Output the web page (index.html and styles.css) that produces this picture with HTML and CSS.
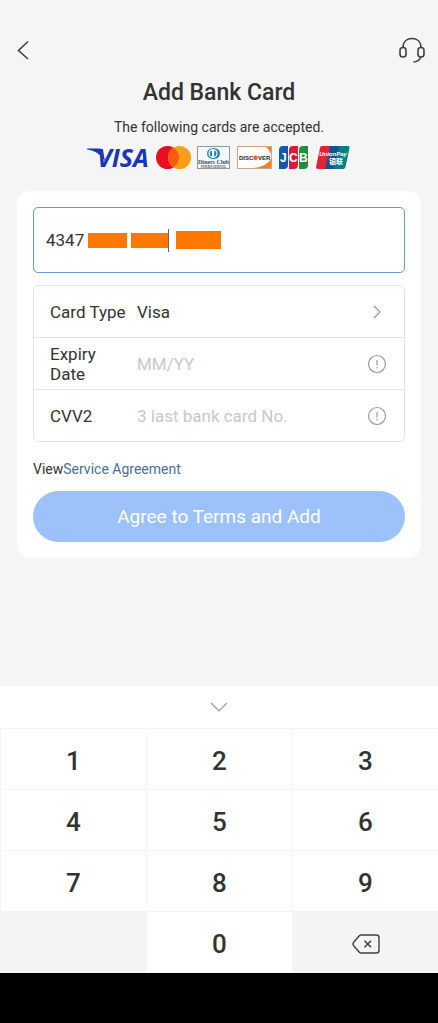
FILE: index.html
```html
<!DOCTYPE html>
<html lang="en">
<head>
<meta charset="utf-8">
<meta name="viewport" content="width=device-width, initial-scale=1">
<title>Add Bank Card</title>
<link rel="stylesheet" href="styles.css">
</head>
<body>
<div class="screen">
  <header class="topbar">
    <button class="icon-btn" type="button" aria-label="Back">
      <svg width="12" height="20" viewBox="0 0 12 20"><path class="line" d="M11 1.500 1.500 10.500l9.500 8.500"/></svg>
    </button>
    <button class="icon-btn" type="button" aria-label="Customer service">
      <svg width="28" height="28" viewBox="0 0 28 28"><g class="line"><rect x="2" y="11.500" width="6" height="9.500" rx="2.800"/><rect x="20" y="11.500" width="6" height="9.500" rx="2.800"/><path d="M5 11.500C5 5.500 9 2.500 14 2.500s9 3 9 9M23 21c-1.500 3.200-4 4.800-7.500 5"/></g></svg>
    </button>
  </header>
  <main class="content">
    <h1 class="title">Add Bank Card</h1>
    <p class="subtitle">The following cards are accepted.</p>
    <div class="brands">
      <svg width="63" height="24" viewBox="0 0 63 24" role="img" aria-label="Visa">
        <path d="M0 2.500h13q2.500 0 3 2.500l2 10C13 8 8 4.500 0 3.500z" fill="#1a36b5"/>
        <text class="visa-text" x="10" y="21">VISA</text>
      </svg>
      <svg width="35" height="24" viewBox="0 0 35 24" role="img" aria-label="Mastercard">
        <circle cx="11.500" cy="11.500" r="11.500" fill="#e80d20"/><circle cx="23.500" cy="11.500" r="11.500" fill="#f79f1b"/>
        <path d="M17.500 1.700a11.500 11.500 0 0 1 0 19.600 11.500 11.500 0 0 1 0-19.600z" fill="#fa5b0c"/>
      </svg>
      <svg width="34" height="24" viewBox="0 0 34 24" role="img" aria-label="Diners Club International">
        <rect x=".5" y=".5" width="32" height="22" fill="#f6f7f8" stroke="#8f9ba3"/>
        <ellipse cx="16.500" cy="7.500" rx="6.500" ry="5.500" fill="#2383b5"/><circle cx="16" cy="7.500" r="4.500" fill="#fff"/>
        <path d="M15 4.200a3.500 3.500 0 0 0 0 6.600zM17.200 4.200a3.500 3.500 0 0 1 0 6.600z" fill="#2383b5"/>
        <text class="diners-text" x="16.500" y="18" text-anchor="middle">Diners Club</text>
        <text class="diners-small" x="16.500" y="21.500" text-anchor="middle">INTERNATIONAL</text>
      </svg>
      <svg width="36" height="24" viewBox="0 0 36 24" role="img" aria-label="Discover">
        <rect x=".5" y=".5" width="34" height="22" fill="#f58220" stroke="#c9a68b"/>
        <path d="M1 1h28c7 6 7 13 0 17-4 2.500-9 4-15 4H1z" fill="#fff"/>
        <text class="discover-text" x="2" y="14">DISC</text><circle cx="18.500" cy="11.800" r="2.400" fill="#f26b21"/><text class="discover-text" x="21" y="14">VER</text>
      </svg>
      <svg width="31" height="24" viewBox="0 0 31 24" role="img" aria-label="JCB">
        <path d="M4 0h5v19q0 4-4 4H0V4q0-4 4-4z" fill="#1559a6"/><path d="M14 0h5v19q0 4-4 4h-5V4q0-4 4-4z" fill="#d31f3d"/><path d="M24 0h5v19q0 4-4 4h-5V4q0-4 4-4z" fill="#21903d"/>
        <text class="jcb-text" x="1" y="16">J</text><text class="jcb-text" x="10" y="16">C</text><text class="jcb-text" x="20" y="16">B</text>
      </svg>
      <svg width="35" height="24" viewBox="0 0 35 24" role="img" aria-label="UnionPay">
        <path d="M6 0h9l-5 23H2q-2 0-2-2L4 2q0-2 2-2z" fill="#df2338"/><path d="M14 0h10l-5 23H9z" fill="#174f91"/><path d="M23 0h9q2 0 1.500 2l-4 19q-.5 2-2.500 2h-9z" fill="#087c87"/>
        <text class="union-text" x="17" y="10" text-anchor="middle">UnionPay</text><text class="union-cjk" x="20" y="18" text-anchor="middle">银联</text>
      </svg>
    </div>
    <form class="card">
      <label class="number">
        <input class="number-input" type="text" inputmode="numeric" aria-label="Card number" value="4347">
        <span class="mask"></span><span class="mask mask-mid"></span><span class="caret"></span><span class="mask mask-last"></span>
      </label>
      <div class="fields">
        <div class="field">
          <label class="field-label" for="type">Card Type</label>
          <select class="field-input" id="type"><option>Visa</option></select>
          <svg class="field-icon" width="20" height="20" viewBox="0 0 20 20"><path d="m7 4 6 6-6 6"/></svg>
        </div>
        <div class="field">
          <label class="field-label" for="expiry">Expiry Date</label>
          <input class="field-input" id="expiry" type="text" placeholder="MM/YY">
          <button class="icon-btn" type="button" aria-label="About expiry date"><svg class="field-icon" width="20" height="20" viewBox="0 0 20 20"><circle cx="10" cy="10" r="8.500"/><path d="M10 6v5.500M10 13v1.500"/></svg></button>
        </div>
        <div class="field">
          <label class="field-label" for="cvv">CVV2</label>
          <input class="field-input" id="cvv" type="text" placeholder="3 last bank card No.">
          <button class="icon-btn" type="button" aria-label="About CVV2"><svg class="field-icon" width="20" height="20" viewBox="0 0 20 20"><circle cx="10" cy="10" r="8.500"/><path d="M10 6v5.500M10 13v1.500"/></svg></button>
        </div>
      </div>
      <p class="terms">View<a class="terms-link" href="#">Service Agreement</a></p>
      <button class="submit" type="button">Agree to Terms and Add</button>
    </form>
  </main>
  <section class="keyboard" aria-label="Numeric keypad">
    <button class="collapse" type="button" aria-label="Hide keypad"><svg width="18" height="10" viewBox="0 0 18 10"><path d="m1 1 8 8 8-8"/></svg></button>
    <div class="keys">
      <button class="key" type="button">1</button><button class="key" type="button">2</button><button class="key" type="button">3</button>
      <button class="key" type="button">4</button><button class="key" type="button">5</button><button class="key" type="button">6</button>
      <button class="key" type="button">7</button><button class="key" type="button">8</button><button class="key" type="button">9</button>
      <span class="key key-muted"></span><button class="key" type="button">0</button>
      <button class="key key-muted" type="button" aria-label="Delete"><svg width="28" height="20" viewBox="0 0 28 20"><path class="line-thin" d="M9 1h15.500Q27 1 27 3.500v13q0 2.500-2.500 2.500H9q-1 0-1.700-.8L1.500 11.500q-1-1.500 0-3L7.300 1.800Q8 1 9 1z"/><path class="line" d="m12.500 6.800 6.500 6.400M19 6.800l-6.500 6.400"/></svg></button>
    </div>
  </section>
  <footer class="navbar"></footer>
</div>
</body>
</html>
```

FILE: styles.css
```css
* { box-sizing: border-box; }
body { margin: 0; background: #f5f5f5; color: #333; font-family: Roboto, "Liberation Sans", sans-serif; }
button, input, select { font: inherit; color: inherit; border: 0; padding: 0; background: none; outline: 0; }
svg { display: block; flex: none; overflow: visible; }
.screen { display: flex; flex-direction: column; min-height: 100vh; }
.topbar { display: flex; justify-content: space-between; align-items: center; padding: 36px 12px 0 17px; }
.icon-btn { flex: none; }
.line { fill: none; stroke: #404040; stroke-width: 1.6; }
.line-thin { fill: none; stroke: #404040; stroke-width: 1.4; }
.content { padding: 0 17px; }
.title { margin: 13px 0 0; font-size: 23px; line-height: 32px; font-weight: 500; text-align: center; }
.subtitle { margin: 7px 0 0; font-size: 14px; line-height: 22px; text-align: center; }
.brands { display: flex; justify-content: center; gap: 6px; margin-top: 8px; }
.visa-text { font: italic 700 25px "Open Sans", sans-serif; fill: #1a36b5; }
.diners-text { font: 700 6px "Liberation Serif", serif; fill: #344d68; }
.diners-small { font: 700 3px "Liberation Serif", serif; fill: #344d68; }
.discover-text { font: 700 6px "Liberation Sans", sans-serif; fill: #222; }
.jcb-text { font: 700 12px "Liberation Sans", sans-serif; fill: #fff; }
.union-text { font: italic 700 6px "Liberation Sans", sans-serif; fill: #fff; }
.union-cjk { font: 700 7px "Noto Sans CJK SC", sans-serif; fill: #fff; }
.card { margin-top: 21px; padding: 16px; border-radius: 14px; background: #fff; }
.number { display: flex; align-items: center; height: 66px; padding: 0 12px; border: 1px solid #6b97c9; border-radius: 5px; }
.number-input { width: 42px; font-size: 17px; line-height: 24px; }
.mask { width: 39px; height: 15px; background: #ff7800; }
.mask-mid { width: 37px; margin-left: 4px; }
.caret { width: 1px; height: 23px; background: #666; }
.mask-last { width: 45px; height: 18px; margin-left: 7px; }
.fields { margin-top: 12px; border: 1px solid #e5e5e5; border-radius: 5px; }
.field { display: flex; align-items: center; height: 51px; padding: 0 17px 0 16px; font-size: 17px; line-height: 20px; }
.field + .field { height: 52px; border-top: 1px solid #e5e5e5; }
.field-label { flex: none; width: 87px; padding-right: 8px; }
.field-input { flex: 1; min-width: 0; appearance: none; }
.field-input::placeholder { color: #c8c8c8; opacity: 1; }
.field-icon { fill: none; stroke: #999; stroke-width: 1.2; }
.terms { margin: 16px 0 0; font-size: 14px; line-height: 22px; }
.terms-link { color: #4f6f94; text-decoration: none; }
.submit { display: block; width: 100%; height: 51px; margin-top: 11px; border-radius: 26px; background: #9dc2fb; color: #fff; font-size: 19px; }
.keyboard { margin-top: auto; background: #fff; }
.collapse { display: flex; justify-content: center; align-items: center; width: 100%; height: 42px; }
.collapse svg { fill: none; stroke: #999; stroke-width: 1.2; }
.keys { display: grid; grid-template-columns: repeat(3, 1fr); grid-auto-rows: 60px; gap: 1px; padding: 1px 0 1px 1px; background: #f4f4f4; }
.key { display: flex; align-items: center; justify-content: center; background: #fff; font-size: 26px; font-weight: 500; padding-top: 4px; }
.key-muted { background: #f4f4f4; }
.navbar { height: 50px; background: #000; }
```
